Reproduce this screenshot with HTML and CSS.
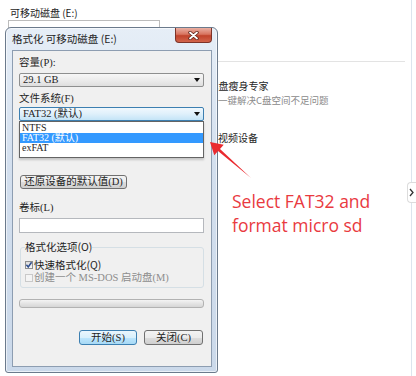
FILE: index.html
```html
<!DOCTYPE html>
<html>
	<head>
		<title>格式化 可移动磁盘</title>
		<link rel="stylesheet" href="styles.css">
	</head>
	<body>
		<div class="desk">
			<div class="behind">
				<div class="behind-title">可移动磁盘 (E:)</div>
				<div class="behind-field"></div>
				<div class="side">
					<div class="side-rule"></div>
					<div class="side-item">
						<div class="side-name">C盘瘦身专家</div>
						<div class="side-desc">一键解决C盘空间不足问题</div>
					</div>
					<div class="side-item second">
						<div class="side-name">音视频设备</div>
					</div>
				</div>
			</div>

			<div class="tab">
				<svg width="9" height="21" viewBox="0 0 9 21"><polyline points="3,7 6,10.5 3,14" fill="none" stroke="#333" stroke-width="1.3"/></svg>
			</div>

			<div class="dialog">
				<div class="titlebar">
					<span class="title">格式化 可移动磁盘 (E:)</span>
					<div class="close">
						<svg width="11" height="9" viewBox="0 0 11 9">
							<path d="M2 1.5 L9 7.5 M9 1.5 L2 7.5" stroke="#5b2219" stroke-width="3.4" stroke-linecap="round"/>
							<path d="M2 1.5 L9 7.5 M9 1.5 L2 7.5" stroke="#fff" stroke-width="1.8" stroke-linecap="round"/>
						</svg>
					</div>
				</div>
				<div class="client">
					<div class="label">容量(P):</div>
					<div class="combo"><span>29.1 GB</span><i class="drop"></i></div>

					<div class="label">文件系统(F)</div>
					<div class="combo-wrap">
						<div class="combo focus"><span>FAT32 (默认)</span><i class="drop"></i></div>
						<ul class="droplist">
							<li>NTFS</li>
							<li class="picked">FAT32 (默认)</li>
							<li>exFAT</li>
						</ul>
					</div>

					<!-- covered by the open list -->
					<div class="label under">分配单元大小(A)</div>
					<div class="combo under"><span>32 KB</span><i class="drop"></i></div>

					<button class="btn restore">还原设备的默认值(D)</button>

					<div class="label">卷标(L)</div>
					<div class="field"></div>

					<fieldset class="group">
						<legend>格式化选项(O)</legend>
						<div class="check">
							<span class="box">
								<svg width="8" height="8" viewBox="0 0 8 8"><path d="M1.4 3.8 L3.2 6 L6.6 1.2" fill="none" stroke="#2f4f8f" stroke-width="1.5"/></svg>
							</span>
							快速格式化(Q)
						</div>
						<div class="check off"><span class="box"></span>创建一个 MS-DOS 启动盘(M)</div>
					</fieldset>

					<div class="progress"></div>

					<div class="actions">
						<button class="btn default">开始(S)</button>
						<button class="btn">关闭(C)</button>
					</div>
				</div>
			</div>

			<svg class="arrow" width="50" height="44" viewBox="0 0 50 44">
				<polygon points="5,4 18.7,6.8 15,10.9 46,40 13,13.1 9.3,17.2" fill="#ea2a2f"/>
			</svg>
			<div class="note">Select FAT32 and<br>format micro sd</div>
		</div>
	</body>
</html>
```

FILE: styles.css
```css
body {
	margin: 0;
	background: #fff;
}
.desk {
	position: relative;
	width: 416px;
	height: 376px;
	overflow: hidden;
	font-family: "Noto Sans CJK SC", sans-serif;
	color: #1e1e1e;
}

/* window behind the dialog */
.behind {
	width: 412px;
	height: 376px;
	box-sizing: border-box;
	border-right: 1px solid #dce5ee;
}
.behind-title {
	padding: 6px 0 0 10px;
	font-size: 10px;
	line-height: 14px;
}
.behind-field {
	margin-left: 8px;
	width: 152px;
	height: 20px;
	box-sizing: border-box;
	border: 1px solid #bcbcbc;
}
.side {
	margin: 21px 0 0 212px;
}
.side-rule {
	margin-left: 6px;
	width: 187px;
	height: 1px;
	background: #e3e3e3;
}
.side-item {
	margin-top: 17px;
}
.side-item.second {
	margin-top: 24px;
}
.side-item.second .side-name {
	margin-left: -4px;
}
.side-name {
	font-size: 10px;
	line-height: 14px;
	color: #262626;
}
.side-desc {
	padding-left: 6px;
	font-size: 9.5px;
	line-height: 14px;
	color: #8a8a8a;
}
.tab {
	position: absolute;
	left: 407px;
	top: 182px;
	width: 9px;
	height: 21px;
	box-sizing: border-box;
	background: #fff;
	border: 1px solid #dcdcdc;
	border-right: 0;
	border-radius: 4px 0 0 4px;
}
.tab svg {
	display: block;
	margin-left: -1px;
	margin-top: -1px;
}

/* format dialog */
.dialog {
	position: absolute;
	left: 5px;
	top: 27px;
	width: 213px;
	height: 346px;
	box-sizing: border-box;
	padding: 0 5px 5px 6px;
	border: 1px solid #6b7a8c;
	border-radius: 6px 6px 3px 3px;
	background: linear-gradient(#e6eef7, #d3dfee 40%, #cbd9ea);
	box-shadow: inset 0 0 0 1px rgba(255,255,255,0.6);
}
.titlebar {
	display: flex;
	align-items: center;
	height: 22px;
}
.title {
	font-size: 10.5px;
	line-height: 12px;
}
.close {
	align-self: flex-start;
	margin-left: auto;
	width: 37px;
	height: 15px;
	box-sizing: border-box;
	display: flex;
	align-items: center;
	justify-content: center;
	border: 1px solid #7d3328;
	border-top: 0;
	border-radius: 0 0 4px 4px;
	background: linear-gradient(#eab0a3, #d8735f 45%, #c1432c 55%, #d2644b);
}
.client {
	height: 317px;
	box-sizing: border-box;
	padding: 0 7px 0 6px;
	border: 1px solid #8d9db1;
	background: #f0f0f0;
	font-family: "Liberation Serif", "Noto Sans CJK SC", serif;
	font-size: 10.5px;
	line-height: 12px;
}
.label {
	margin-top: 6px;
}
.under {
	visibility: hidden;
}
.combo {
	display: flex;
	align-items: center;
	height: 14px;
	margin-top: 4px;
	padding-left: 3px;
	box-sizing: border-box;
	border: 1px solid #8e8f8f;
	border-radius: 2px;
	background: linear-gradient(#f7f7f7, #ececec 50%, #dedede);
}
.combo-wrap {
	position: relative;
	z-index: 1;
	margin-top: 2px;
}
.combo-wrap .combo {
	margin-top: 0;
}
.label.under + .combo {
	margin-top: 2px;
}
.combo.focus {
	border-color: #3c7fb1;
	background: linear-gradient(#f0f8fd, #dff0fb 50%, #c4e4f7);
}
.drop {
	margin-left: auto;
	margin-right: 3px;
	width: 0;
	height: 0;
	border-left: 3.5px solid transparent;
	border-right: 3.5px solid transparent;
	border-top: 4px solid #111;
}
.droplist {
	position: absolute;
	left: 0;
	right: 0;
	top: 100%;
	margin: 0;
	padding: 1px 0 4px;
	list-style: none;
	border: 1px solid #646464;
	background: #fff;
	box-shadow: 0 2px 2px rgba(0,0,0,0.18);
	font-size: 10px;
	line-height: 10px;
}
.droplist li {
	height: 10px;
	padding-left: 2px;
}
.droplist li.picked {
	background: #3399ff;
	color: #fff;
}
.btn {
	display: block;
	height: 14px;
	padding: 0;
	box-sizing: border-box;
	font: inherit;
	color: #1e1e1e;
	border: 1px solid #707070;
	border-radius: 3px;
	background: linear-gradient(#f3f3f3, #ebebeb 50%, #dddddd 51%, #cfcfcf);
}
.restore {
	width: 107px;
	margin: 20px 0 0 1px;
}
.label + .field {
	margin-top: 4px;
}
.restore + .label {
	margin-top: 13px;
}
.field {
	height: 15px;
	box-sizing: border-box;
	border: 1px solid #b5b8bd;
	background: #fff;
}
.group {
	margin: 8px 0 0 1px;
	padding: 5px 4px 3px;
	border: 1px solid #d5dfe5;
	border-radius: 3px;
}
.group legend {
	padding: 0;
	font-family: "Noto Sans CJK SC", sans-serif;
}
.check {
	display: flex;
	align-items: center;
	height: 13px;
	font-family: "Noto Sans CJK SC", sans-serif;
}
.box {
	width: 8px;
	height: 8px;
	margin-right: 1px;
	box-sizing: border-box;
	border: 1px solid #8e8f8f;
	background: linear-gradient(#dcdcdc, #f8f8f8);
}
.box svg {
	display: block;
	margin: -1px 0 0 -1px;
}
.check.off {
	color: #8d8d8d;
	font-family: "Liberation Serif", "Noto Sans CJK SC", serif;
}
.check.off .box {
	border-color: #c9c9c9;
	background: #f4f4f4;
}
.progress {
	height: 9px;
	margin-top: 11px;
	box-sizing: border-box;
	border: 1px solid #b2b2b2;
	border-radius: 3px;
	background: linear-gradient(#f4f4f4, #e4e4e4 50%, #d6d6d6);
}
.actions {
	display: flex;
	justify-content: flex-end;
	gap: 7px;
	margin: 22px 1px 0 0;
}
.actions .btn {
	width: 59px;
	height: 15px;
}
.btn.default {
	width: 58px;
	border-color: #3c7fb1;
	background: linear-gradient(#eaf6fd, #d9f0fc 50%, #bee6fd 51%, #a7d9f5);
}

/* annotation */
.arrow {
	position: absolute;
	left: 205px;
	top: 138px;
}
.note {
	position: absolute;
	left: 232px;
	top: 189px;
	font-family: "Open Sans", sans-serif;
	font-size: 17.5px;
	line-height: 24px;
	color: #e93a3f;
	white-space: nowrap;
}
```
